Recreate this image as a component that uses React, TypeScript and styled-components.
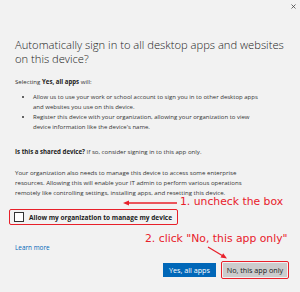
import React from 'react'
import styled, { createGlobalStyle } from 'styled-components'

const GlobalStyle = createGlobalStyle`
  html, body {
    margin: 0;
    padding: 0;
    background: #f2f2f2;
  }
  body {
    font-family: "Open Sans", "Liberation Sans", sans-serif;
  }
`

const Dialog = styled.div`
  position: relative;
  width: 300px;
  height: 292px;
  box-sizing: border-box;
  padding: 0 15px;
  background: #f2f2f2;
  color: #1f1f1f;
  display: flex;
  flex-direction: column;
  overflow: hidden;
`

const TopBar = styled.div`
  height: 38px;
  margin-right: -12px;
  display: flex;
  justify-content: flex-end;
  align-items: flex-start;
`

const CloseButton = styled.button`
  margin-top: 2px;
  padding: 0;
  width: 8px;
  height: 8px;
  border: none;
  background: none;
  display: flex;
  align-items: center;
  justify-content: center;
`

const Title = styled.h1`
  margin: 0;
  font-size: 11.2px;
  line-height: 14px;
  font-weight: 300;
  color: #222;
  white-space: nowrap;
`

const Text = styled.p<{ $gap: number }>`
  margin: ${({ $gap }) => $gap}px 0 0;
  font-size: 6.1px;
  line-height: 10px;
  color: #333;
  white-space: nowrap;

  b {
    font-weight: 700;
    color: #1a1a1a;
  }
`

const BulletList = styled.ul`
  margin: 5px 0 0;
  padding: 0 0 0 18px;
  font-size: 6px;
  line-height: 10px;
  color: #333;
  white-space: nowrap;
`

const Bullet = styled.li`
  list-style: disc;
`

const CheckRow = styled.label<{ $highlight: boolean }>`
  margin: 11px 0 0 -6px;
  width: 169px;
  height: 16px;
  box-sizing: border-box;
  padding: 0 4px;
  display: flex;
  align-items: center;
  gap: 5px;
  border: ${({ $highlight }) => ($highlight ? '1.5px solid #e8202a' : 'none')};
  border-radius: 2px;
`

const Box = styled.span`
  width: 8px;
  height: 8px;
  border: 1px solid #333;
  background: #fff;
  flex: none;
`

const CheckLabel = styled.span`
  font-size: 6.5px;
  font-weight: 700;
  color: #1a1a1a;
  white-space: nowrap;
`

const Link = styled.a`
  margin-top: 18px;
  font-size: 6.4px;
  line-height: 10px;
  color: #0067b8;
  text-decoration: none;
  align-self: flex-start;
`

const Actions = styled.div`
  margin: 8px -4px 0 0;
  display: flex;
  justify-content: flex-end;
  align-items: center;
  gap: 5px;
`

const Button = styled.button<{ $primary?: boolean }>`
  height: 14px;
  padding: 0;
  width: ${({ $primary }) => ($primary ? 53 : 64)}px;
  border: none;
  font-family: inherit;
  font-size: 7.2px;
  white-space: nowrap;
  background: ${({ $primary }) => ($primary ? '#0067b8' : '#cccccc')};
  color: ${({ $primary }) => ($primary ? '#fff' : '#1a1a1a')};
`

const Frame = styled.span`
  padding: 1px;
  border: 1.5px solid #e8202a;
  border-radius: 2px;
  display: flex;
`

const Note = styled.div<{ $x: number; $y: number }>`
  position: absolute;
  left: ${({ $x }) => $x}px;
  top: ${({ $y }) => $y}px;
  font-family: "DejaVu Sans", Verdana, sans-serif;
  font-size: 10.8px;
  line-height: 12px;
  color: #e8202a;
  white-space: nowrap;
`

const ArrowLayer = styled.svg`
  position: absolute;
  left: 0;
  top: 0;
  pointer-events: none;
`

export default function App() {
  return (
    <>
      <GlobalStyle />
      <Dialog>
        <TopBar>
          <CloseButton aria-label="Close">
            <svg width="5" height="5" viewBox="0 0 5 5">
              <path d="M0.5 0.5L4.5 4.5M4.5 0.5L0.5 4.5" stroke="#444" strokeWidth="0.8" />
            </svg>
          </CloseButton>
        </TopBar>
        <Title>
          Automatically sign in to all desktop apps and websites
          <br />
          on this device?
        </Title>
        <Text $gap={11}>
          Selecting <b>Yes, all apps</b> will:
        </Text>
        <BulletList>
          <Bullet>
            Allow us to use your work or school account to sign you in to other desktop apps
            <br />
            and websites you use on this device.
          </Bullet>
          <Bullet>
            Register this device with your organization, allowing your organization to view
            <br />
            device information like the device's name.
          </Bullet>
        </BulletList>
        <Text $gap={15}>
          <b>Is this a shared device?</b> If so, consider signing in to this app only.
        </Text>
        <Text $gap={11}>
          Your organization also needs to manage this device to access some enterprise
          <br />
          resources. Allowing this will enable your IT admin to perform various operations
          <br />
          remotely like controlling settings, installing apps, and resetting this device.
        </Text>
        <CheckRow $highlight>
          <Box />
          <CheckLabel>Allow my organization to manage my device</CheckLabel>
        </CheckRow>
        <Link href="#">Learn more</Link>
        <Actions>
          <Button $primary>Yes, all apps</Button>
          <Frame>
            <Button>No, this app only</Button>
          </Frame>
        </Actions>

        <Note $x={180} $y={196}>1. uncheck the box</Note>
        <Note $x={145} $y={233}>2. click "No, this app only"</Note>
        <ArrowLayer width="300" height="292" viewBox="0 0 300 292">
          <line x1="177" y1="203" x2="127" y2="203" stroke="#e8202a" strokeWidth="1.3" />
          <path d="M123 203L129 200.5L129 205.5Z" fill="#e8202a" />
          <line x1="208" y1="247" x2="223" y2="256" stroke="#e8202a" strokeWidth="1.2" />
          <path d="M227 258.5L220.5 257.6L223.2 253.3Z" fill="#e8202a" />
        </ArrowLayer>
      </Dialog>
    </>
  )
}
